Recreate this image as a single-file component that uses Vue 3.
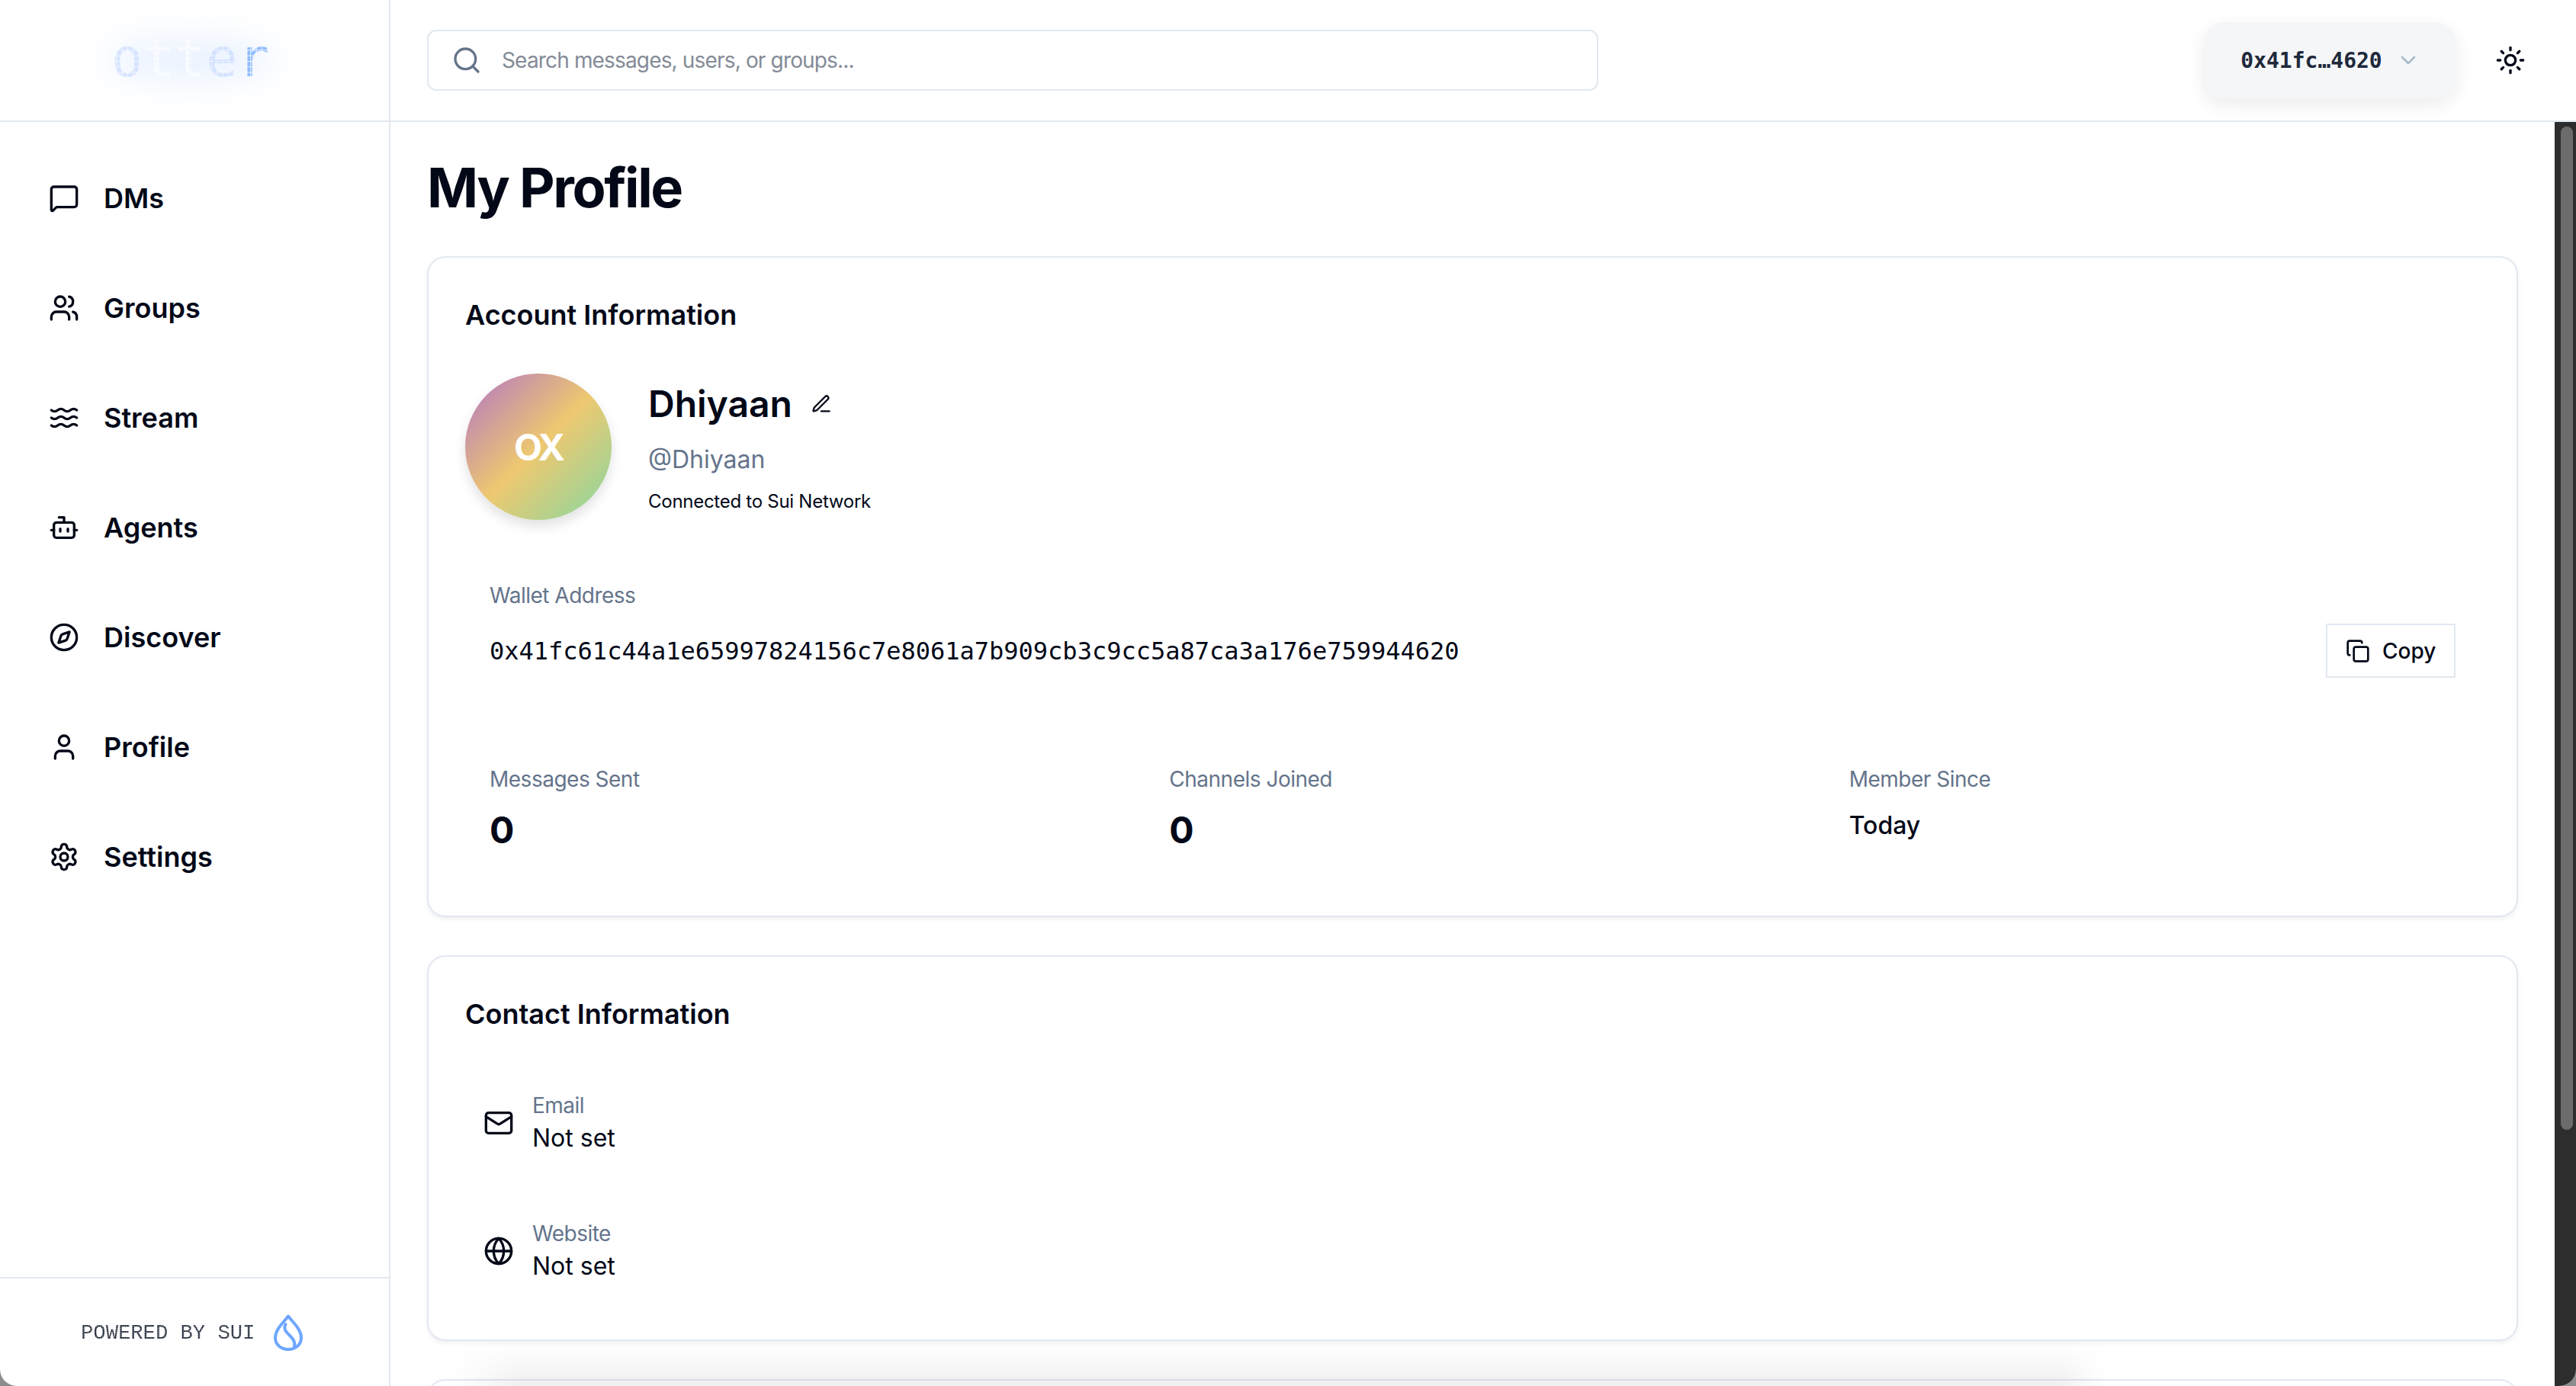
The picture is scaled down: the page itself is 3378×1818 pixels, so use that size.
<script setup>
const nav = [
  { label: 'DMs', icon: 'dm' },
  { label: 'Groups', icon: 'users' },
  { label: 'Stream', icon: 'waves' },
  { label: 'Agents', icon: 'bot' },
  { label: 'Discover', icon: 'compass' },
  { label: 'Profile', icon: 'user' },
  { label: 'Settings', icon: 'gear' },
]
const address = '0x41fc61c44a1e65997824156c7e8061a7b909cb3c9cc5a87ca3a176e759944620'
const stats = [
  { label: 'Messages Sent', value: '0', big: true },
  { label: 'Channels Joined', value: '0', big: true },
  { label: 'Member Since', value: 'Today', big: false },
]
</script>

<template>
  <div class="app">
    <aside class="sidebar">
      <div class="brand">
        <div class="glow"></div>
        <span class="logo">otter</span>
      </div>
      <nav class="nav">
        <a v-for="n in nav" :key="n.label" class="nav-item">
          <svg class="ico40" viewBox="0 0 24 24">
            <path v-if="n.icon === 'dm'" d="M22 17a2 2 0 0 1-2 2H6.828a2 2 0 0 0-1.414.586l-2.202 2.202A.71.71 0 0 1 2 21.286V5a2 2 0 0 1 2-2h16a2 2 0 0 1 2 2z" />
            <template v-if="n.icon === 'users'">
              <path d="M16 21v-2a4 4 0 0 0-4-4H6a4 4 0 0 0-4 4v2" /><circle cx="9" cy="7" r="4" />
              <path d="M22 21v-2a4 4 0 0 0-3-3.87" /><path d="M16 3.13a4 4 0 0 1 0 7.75" />
            </template>
            <template v-if="n.icon === 'waves'">
              <path d="M2 6c.6.5 1.2 1 2.5 1C7 7 7 5 9.5 5c2.6 0 2.4 2 5 2 2.5 0 2.5-2 5-2 1.3 0 1.9.5 2.5 1" />
              <path d="M2 12c.6.5 1.2 1 2.5 1 2.5 0 2.5-2 5-2 2.6 0 2.4 2 5 2 2.5 0 2.5-2 5-2 1.3 0 1.9.5 2.5 1" />
              <path d="M2 18c.6.5 1.2 1 2.5 1 2.5 0 2.5-2 5-2 2.6 0 2.4 2 5 2 2.5 0 2.5-2 5-2 1.3 0 1.9.5 2.5 1" />
            </template>
            <template v-if="n.icon === 'bot'">
              <path d="M12 8V4H8" /><rect x="4" y="8" width="16" height="12" rx="2" />
              <path d="M2 14h2" /><path d="M20 14h2" /><path d="M15 13v2" /><path d="M9 13v2" />
            </template>
            <template v-if="n.icon === 'compass'">
              <circle cx="12" cy="12" r="10" />
              <path d="m16.24 7.76-1.804 5.411a2 2 0 0 1-1.265 1.265L7.76 16.24l1.804-5.411a2 2 0 0 1 1.265-1.265z" />
            </template>
            <template v-if="n.icon === 'user'">
              <path d="M19 21v-2a4 4 0 0 0-4-4H9a4 4 0 0 0-4 4v2" /><circle cx="12" cy="7" r="4" />
            </template>
            <template v-if="n.icon === 'gear'">
              <path d="M12.22 2h-.44a2 2 0 0 0-2 2v.18a2 2 0 0 1-1 1.73l-.43.25a2 2 0 0 1-2 0l-.15-.08a2 2 0 0 0-2.73.73l-.22.38a2 2 0 0 0 .73 2.73l.15.1a2 2 0 0 1 1 1.72v.51a2 2 0 0 1-1 1.74l-.15.09a2 2 0 0 0-.73 2.73l.22.38a2 2 0 0 0 2.73.73l.15-.08a2 2 0 0 1 2 0l.43.25a2 2 0 0 1 1 1.73V20a2 2 0 0 0 2 2h.44a2 2 0 0 0 2-2v-.18a2 2 0 0 1 1-1.73l.43-.25a2 2 0 0 1 2 0l.15.08a2 2 0 0 0 2.73-.73l.22-.39a2 2 0 0 0-.73-2.73l-.15-.08a2 2 0 0 1-1-1.74v-.5a2 2 0 0 1 1-1.74l.15-.09a2 2 0 0 0 .73-2.73l-.22-.38a2 2 0 0 0-2.73-.73l-.15.08a2 2 0 0 1-2 0l-.43-.25a2 2 0 0 1-1-1.73V4a2 2 0 0 0-2-2z" />
              <circle cx="12" cy="12" r="3" />
            </template>
          </svg>
          <span>{{ n.label }}</span>
        </a>
      </nav>
      <div class="powered">
        <span class="powered-text">POWERED BY SUI</span>
        <svg class="drop" viewBox="0 0 38 48">
          <path d="M19 2.5C24 9.5 36 19 36 31c0 8.5-7.5 15-17 15S2 39.500 2 31C2 19 14 9.500 19 2.500z" />
          <path d="M15.500 13C9 25 30 28 27 42" />
        </svg>
      </div>
    </aside>

    <div class="column">
      <header class="topbar">
        <div class="search">
          <svg class="ico40 muted" viewBox="0 0 24 24"><circle cx="11" cy="11" r="8" /><path d="m21 21-4.300-4.300" /></svg>
          <span class="placeholder">Search messages, users, or groups...</span>
        </div>
        <button class="wallet">
          <span>0x41fc…4620</span>
          <svg class="ico32 chev" viewBox="0 0 24 24"><path d="m6 9 6 6 6-6" /></svg>
        </button>
        <svg class="ico40 sun" viewBox="0 0 24 24">
          <circle cx="12" cy="12" r="4" /><path d="M12 2v2" /><path d="M12 20v2" /><path d="m4.930 4.930 1.410 1.410" />
          <path d="m17.660 17.660 1.410 1.410" /><path d="M2 12h2" /><path d="M20 12h2" /><path d="m6.340 17.660-1.410 1.410" />
          <path d="m19.070 4.930-1.410 1.410" />
        </svg>
      </header>

      <div class="body">
        <main class="content">
          <h1>My Profile</h1>

          <section class="card">
            <h2>Account Information</h2>
            <div class="identity">
              <div class="avatar">OX</div>
              <div class="who">
                <div class="name-row">
                  <span class="name">Dhiyaan</span>
                  <svg class="ico28" viewBox="0 0 24 24">
                    <path d="M12 20h9" />
                    <path d="M16.376 3.622a1 1 0 0 1 3.002 3.002L7.368 18.635a2 2 0 0 1-.855.506l-2.872.838a.5.5 0 0 1-.620-.620l.838-2.872a2 2 0 0 1 .506-.854z" />
                  </svg>
                </div>
                <div class="handle">@Dhiyaan</div>
                <div class="network">Connected to Sui Network</div>
              </div>
            </div>
            <div class="wallet-block">
              <div class="label">Wallet Address</div>
              <div class="address-row">
                <code class="address">{{ address }}</code>
                <button class="copy">
                  <svg class="ico32" viewBox="0 0 24 24">
                    <rect x="8" y="8" width="14" height="14" rx="2" />
                    <path d="M4 16c-1.100 0-2-.900-2-2V4c0-1.100.900-2 2-2h10c1.100 0 2 .900 2 2" />
                  </svg>
                  <span>Copy</span>
                </button>
              </div>
            </div>
            <div class="stats">
              <div v-for="s in stats" :key="s.label" class="stat">
                <div class="label">{{ s.label }}</div>
                <div :class="s.big ? 'stat-big' : 'stat-text'">{{ s.value }}</div>
              </div>
            </div>
          </section>

          <section class="card contact">
            <h2>Contact Information</h2>
            <div class="contact-list">
              <div class="contact-row">
                <svg class="ico40" viewBox="0 0 24 24">
                  <rect x="2" y="4" width="20" height="16" rx="2" />
                  <path d="m22 7-8.970 5.700a1.940 1.940 0 0 1-2.060 0L2 7" />
                </svg>
                <div>
                  <div class="label">Email</div>
                  <div class="value">Not set</div>
                </div>
              </div>
              <div class="contact-row">
                <svg class="ico40" viewBox="0 0 24 24">
                  <circle cx="12" cy="12" r="10" />
                  <path d="M12 2a14.500 14.500 0 0 0 0 20 14.500 14.500 0 0 0 0-20" />
                  <path d="M2 12h20" />
                </svg>
                <div>
                  <div class="label">Website</div>
                  <div class="value">Not set</div>
                </div>
              </div>
            </div>
          </section>

          <section class="card tail"></section>
        </main>
        <div class="fade"></div>
        <div class="scrollbar"><div class="thumb"></div></div>
      </div>
    </div>
  </div>
</template>

<style>
html, body { margin: 0; background: #8c8c8c; }
</style>

<style scoped>
.app {
  display: flex;
  width: 3378px;
  height: 1818px;
  overflow: hidden;
  background: #fff;
  border-radius: 0 0 22px 22px;
  font-family: Inter, "Noto Sans", sans-serif;
  color: #020817;
}
svg { fill: none; stroke: currentColor; stroke-width: 2; stroke-linecap: round; stroke-linejoin: round; flex: none; display: block; }
.ico40 { width: 40px; height: 40px; }
.ico32 { width: 32px; height: 32px; }
.ico28 { width: 28px; height: 28px; }

.sidebar {
  width: 512px;
  flex: none;
  box-sizing: border-box;
  border-right: 2px solid #e2e8f0;
  display: flex;
  flex-direction: column;
}
.brand {
  position: relative;
  height: 160px;
  flex: none;
  box-sizing: border-box;
  border-bottom: 2px solid #e2e8f0;
  overflow: hidden;
}
.glow {
  position: absolute;
  left: 140px;
  top: 50px;
  width: 220px;
  height: 56px;
  border-radius: 50%;
  background: #e6efff;
  filter: blur(22px);
  opacity: .85;
}
.logo {
  position: absolute;
  left: 146px;
  top: 36px;
  font-family: "DejaVu Sans Mono", monospace;
  font-weight: 400;
  font-size: 69px;
  line-height: 80px;
  background: linear-gradient(90deg, #d6e4fe 0 20%, #fbfcff 22% 58%, #d3e2fd 62% 80%, #8fbcfd 82%);
  -webkit-background-clip: text;
  background-clip: text;
  color: transparent;
  -webkit-mask-image: linear-gradient(90deg, #000 6.600px, transparent 6.600px), linear-gradient(0deg, #000 6.600px, transparent 6.600px);
  mask-image: linear-gradient(90deg, #000 6.600px, transparent 6.600px), linear-gradient(0deg, #000 6.600px, transparent 6.600px);
  -webkit-mask-size: 7.330px 100%, 100% 7.330px;
  mask-size: 7.330px 100%, 100% 7.330px;
  -webkit-mask-composite: source-in;
  mask-composite: intersect;
}
.nav { padding-top: 28px; display: flex; flex-direction: column; }
.nav-item {
  height: 144px;
  padding-left: 64px;
  display: flex;
  align-items: center;
  gap: 32px;
  font-size: 36px;
  font-weight: 600;
}
.powered {
  margin-top: auto;
  height: 143px;
  box-sizing: border-box;
  border-top: 2px solid #e2e8f0;
  padding-left: 106px;
  display: flex;
  align-items: center;
  gap: 25px;
}
.powered-text {
  padding-top: 3px;
  font-family: "Liberation Mono", monospace;
  font-size: 27.200px;
  line-height: 32px;
  color: #1a2333;
  -webkit-mask-image: radial-gradient(circle at 50% 50%, #000 1.100px, transparent 1.400px);
  mask-image: radial-gradient(circle at 50% 50%, #000 1.100px, transparent 1.400px);
  -webkit-mask-size: 2.600px 2.600px;
  mask-size: 2.600px 2.600px;
}
.drop { width: 38px; height: 48px; color: #6ea6ff; stroke-width: 4; }

.column { flex: 1; min-width: 0; display: flex; flex-direction: column; }
.topbar {
  height: 160px;
  flex: none;
  box-sizing: border-box;
  border-bottom: 2px solid #e2e8f0;
  padding: 0 66px 0 48px;
  display: flex;
  align-items: center;
}
.search {
  width: 1536px;
  height: 80px;
  box-sizing: border-box;
  border: 2px solid #e2e8f0;
  border-radius: 12px;
  padding-left: 30px;
  display: flex;
  align-items: center;
  gap: 26px;
}
.muted { color: #64748b; }
.placeholder { font-size: 28px; letter-spacing: -.84px; color: #848b97; }
.wallet {
  margin-left: auto;
  width: 330px;
  height: 100px;
  box-sizing: border-box;
  border: 0;
  border-radius: 26px;
  background: #f5f6f8;
  box-shadow: 0 8px 24px rgba(0, 0, 0, .08);
  display: flex;
  align-items: center;
  justify-content: center;
  gap: 18px;
  font-family: "DejaVu Sans Mono", monospace;
  font-weight: 700;
  font-size: 28px;
  color: #1e293b;
  padding: 0 0 0 2px;
}
.chev { color: #a9bccd; }
.sun { margin-left: 52px; }

.body { flex: 1; min-height: 0; display: flex; position: relative; }
.content { flex: 1; min-width: 0; padding: 46px 48px 0; overflow: hidden; }
h1 { margin: 0 0 50px; font-size: 72px; line-height: 80px; font-weight: 700; letter-spacing: -2.400px; }
.card {
  border: 2px solid #e2e8f0;
  border-radius: 24px;
  padding: 51px 48px 48px;
  background: #fff;
  box-shadow: 0 3px 6px rgba(0, 0, 0, .06);
  margin-bottom: 50px;
}
h2 { margin: 0; font-size: 36px; line-height: 48px; font-weight: 600; }
.identity { margin-top: 53px; display: flex; gap: 48px; }
.avatar {
  width: 192px;
  height: 192px;
  border-radius: 50%;
  flex: none;
  display: flex;
  align-items: center;
  justify-content: center;
  background: linear-gradient(135deg, #b274c5 0%, #eec870 50%, #86d8a2 100%);
  box-shadow: 0 8px 16px rgba(0, 0, 0, .12);
  color: #fff;
  font-size: 48px;
  font-weight: 700;
  letter-spacing: -3px;
}
.who { padding-top: 10px; }
.name-row { display: flex; align-items: center; gap: 24px; height: 60px; }
.name { font-size: 48px; line-height: 60px; font-weight: 600; }
.handle { margin-top: 21px; font-size: 32px; line-height: 44px; color: #64748b; }
.network { margin-top: 17px; font-size: 24px; line-height: 32px; letter-spacing: -.27px; }
.wallet-block { margin-top: 79px; padding: 0 32px; }
.label { font-size: 28px; line-height: 40px; color: #64748b; letter-spacing: -.5px; }
.address-row { margin-top: 17px; display: flex; align-items: center; justify-content: space-between; }
.address { font-family: "DejaVu Sans Mono", monospace; font-size: 32px; line-height: 48px; }
.copy {
  width: 170px;
  height: 71px;
  box-sizing: border-box;
  border: 2px solid #e2e8f0;
  background: #fff;
  padding: 0 0 0 24px;
  display: flex;
  align-items: center;
  gap: 16px;
  font-family: inherit;
  font-size: 28px;
  font-weight: 500;
  color: #020817;
}
.stats { margin-top: 113px; margin-bottom: 34px; padding: 0 32px; display: grid; grid-template-columns: repeat(3, 1fr); gap: 96px; }
.stat-big { margin-top: 17px; font-size: 48px; line-height: 60px; font-weight: 700; }
.stat-text { margin-top: 19px; font-size: 32px; line-height: 44px; font-weight: 500; }
.contact-list { margin-top: 76px; padding: 0 24px 26px; display: flex; flex-direction: column; gap: 83px; }
.contact-row { display: flex; align-items: center; gap: 24px; }
.value { margin-top: 1px; font-size: 32px; line-height: 44px; font-weight: 400; }
.tail { height: 300px; }
.fade {
  position: absolute;
  left: 80px;
  width: 2170px;
  bottom: 0;
  height: 58px;
  pointer-events: none;
  background: linear-gradient(180deg, rgba(0, 0, 0, 0), rgba(0, 0, 0, .06));
  -webkit-mask-image: linear-gradient(90deg, transparent, #000 90px, #000 calc(100% - 60px), transparent);
  mask-image: linear-gradient(90deg, transparent, #000 90px, #000 calc(100% - 60px), transparent);
}
.scrollbar { width: 28px; flex: none; box-sizing: border-box; background: #2d2d2d; padding: 6px 4px 0 8px; }
.thumb { height: 1316px; border-radius: 8px; background: #6b6b6b; }
</style>
